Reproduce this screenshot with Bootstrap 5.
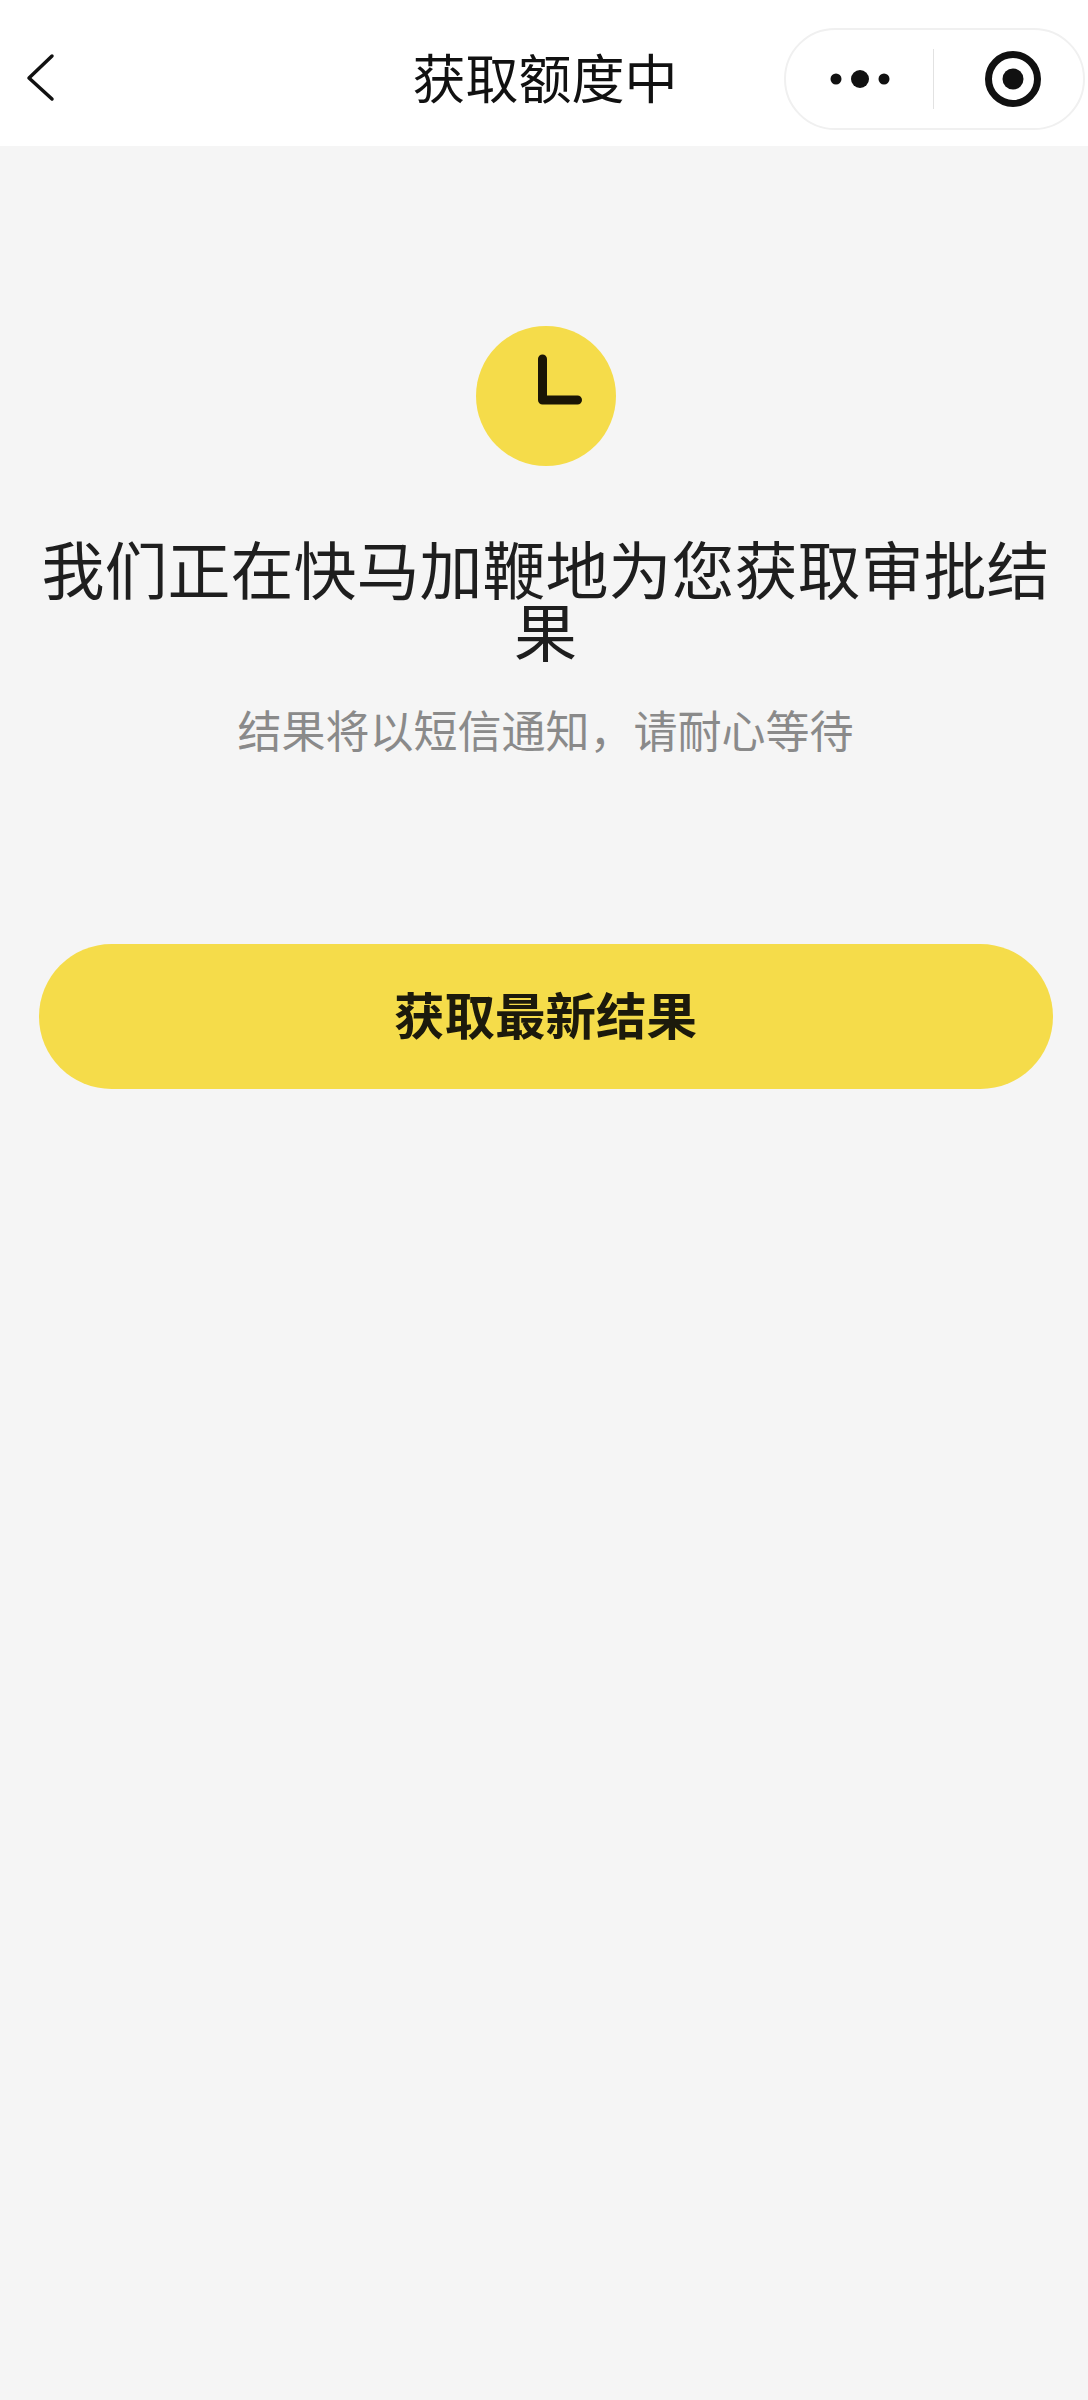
<!DOCTYPE html>
<html lang="zh-CN">
<head>
  <meta charset="UTF-8" />
  <meta name="viewport" content="width=device-width, initial-scale=1" />
  <title>获取额度中</title>
  <link href="https://cdn.jsdelivr.net/npm/bootstrap@5.3.0/dist/css/bootstrap.min.css" rel="stylesheet" />
  <style>
    body, html {
      height: 100%;
      margin: 0;
    }

    body {
      background: #f5f5f5;
      font-family: "Liberation Sans", "Noto Sans CJK SC", sans-serif;
      color: #1a1a1a;
    }

    .top-bar {
      height: 146px;
      background: #fff;
      position: relative;
      padding-left: 26px;
      padding-right: 3px;
    }

    .back-btn {
      background: none;
      border: 0;
      padding: 0;
      line-height: 0;
    }

    .top-title {
      position: absolute;
      left: 0;
      right: 0;
      top: 41px;
      text-align: center;
      font-size: 53px;
      line-height: 80px;
      color: #111;
      padding-left: 2px;
    }

    .capsule {
      width: 301px;
      height: 102px;
      margin-top: 28px;
      border: 2px solid #f0f0f0;
      border-radius: 51px;
      background: #fff;
      position: relative;
      z-index: 1;
    }

    .capsule-more {
      width: 147px;
    }

    .capsule-close {
      width: 149px;
      padding-left: 8px;
    }

    .capsule-line {
      width: 1px;
      height: 60px;
      background: #e2e2e2;
    }

    .status-wrap {
      padding-left: 3px;
    }

    .clock-badge {
      width: 140px;
      height: 140px;
      margin-top: 180px;
      background: #f5dc4a;
    }

    .wait-title {
      font-size: 63px;
      line-height: 62px;
      font-weight: 400;
      color: #1e1e1e;
      margin: 75px 0 0;
      padding: 0 30px;
    }

    .wait-note {
      font-size: 44px;
      line-height: 60px;
      color: #8a8a8a;
      margin: 38px 0 0;
    }

    .refresh-btn {
      display: block;
      width: 1014px;
      height: 145px;
      margin: 181px auto 0;
      padding: 2px 0 0;
      border: 0;
      border-radius: 73px;
      background: #f5dc4a;
      color: #1c1a0c;
      font-size: 50.5px;
      font-weight: 700;
    }

    .refresh-btn:hover, .refresh-btn:active {
      background: #f5dc4a !important;
      color: #1c1a0c !important;
    }
  </style>
</head>
<body>
  <!-- Top bar -->
  <div class="top-bar d-flex justify-content-between align-items-start">
    <button type="button" class="back-btn mt-5" aria-label="返回">
      <svg width="30" height="56" viewBox="0 0 30 56" fill="none" stroke="#111" stroke-width="3.5" stroke-linecap="round" stroke-linejoin="round"><path d="M26 8 3 30 26 51"/></svg>
    </button>
    <div class="top-title">获取额度中</div>
    <div class="capsule d-flex align-items-center">
      <div class="capsule-more d-flex justify-content-center">
        <svg width="60" height="24" viewBox="0 0 60 24" fill="#111"><circle cx="6" cy="12" r="5.5"/><circle cx="30" cy="12" r="9"/><circle cx="54" cy="12" r="5.5"/></svg>
      </div>
      <div class="capsule-line"></div>
      <div class="capsule-close d-flex justify-content-center">
        <svg width="56" height="56" viewBox="0 0 56 56" fill="none"><circle cx="28" cy="28" r="24.5" stroke="#111" stroke-width="7"/><circle cx="28" cy="28" r="10.5" fill="#111"/></svg>
      </div>
    </div>
  </div>

  <!-- Status -->
  <div class="status-wrap text-center">
    <div class="clock-badge rounded-circle d-flex align-items-center justify-content-center mx-auto">
      <svg width="140" height="140" viewBox="0 0 140 140" fill="none" stroke="#1a1505" stroke-width="9" stroke-linecap="round" stroke-linejoin="round"><path d="M66.5 33V74H101.5"/></svg>
    </div>
    <h1 class="wait-title">我们正在快马加鞭地为您获取审批结果</h1>
    <p class="wait-note">结果将以短信通知，请耐心等待</p>
    <button type="button" class="btn refresh-btn">获取最新结果</button>
  </div>

  <script src="https://cdn.jsdelivr.net/npm/bootstrap@5.3.0/dist/js/bootstrap.bundle.min.js"></script>
</body>
</html>
